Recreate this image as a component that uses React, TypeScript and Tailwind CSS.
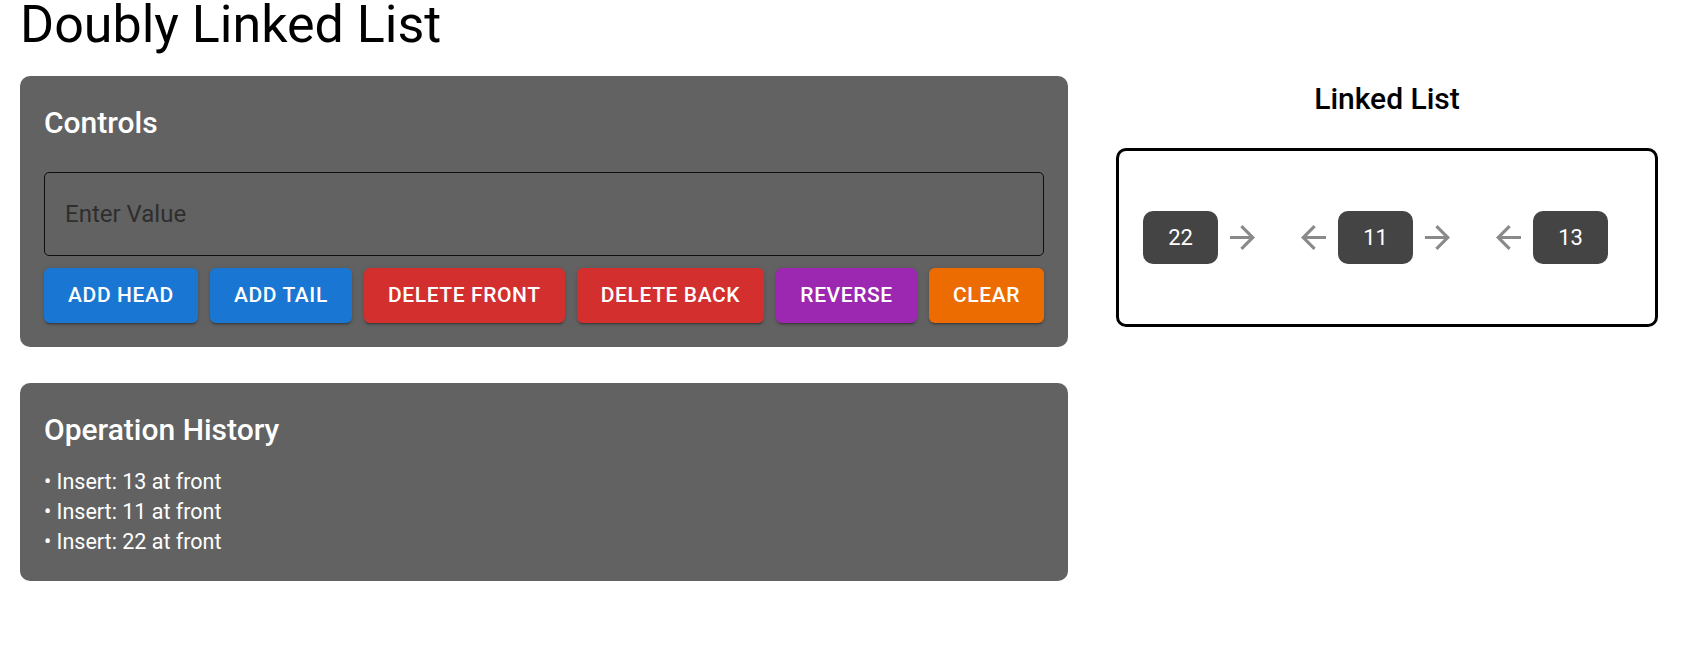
import React from 'react';

const buttons = [
    { label: 'Add Head', color: 'bg-[#1976d2]' },
    { label: 'Add Tail', color: 'bg-[#1976d2]' },
    { label: 'Delete Front', color: 'bg-[#d32f2f]' },
    { label: 'Delete Back', color: 'bg-[#d32f2f]' },
    { label: 'Reverse', color: 'bg-[#9c27b0]' },
    { label: 'Clear', color: 'bg-[#ed6c02]' },
];

const nodes = [22, 11, 13];

const history = ['Insert: 13 at front', 'Insert: 11 at front', 'Insert: 22 at front'];

const ArrowForward = () => (
    <svg width="25" height="25" viewBox="4 4 16 16" className="shrink-0 fill-[#8a8a8a]">
        <path d="M12 4l-1.41 1.41L16.17 11H4v2h12.17l-5.58 5.59L12 20l8-8z" />
    </svg>
);

const ArrowBack = () => (
    <svg width="25" height="25" viewBox="4 4 16 16" className="shrink-0 fill-[#8a8a8a]">
        <path d="M20 11H7.83l5.59-5.59L12 4l-8 8 8 8 1.41-1.41L7.83 13H20z" />
    </svg>
);

export default function App() {
    return (
        <div className="min-h-screen bg-white font-[Roboto,sans-serif] text-black">
            <div className="h-0 shadow-[0_2px_4px_-1px_rgba(0,0,0,0.2),0_4px_5px_0_rgba(0,0,0,0.14),0_1px_10px_0_rgba(0,0,0,0.12)]"></div>
            <div className="px-5">
                <h1 className="text-[52px] leading-[50px] font-normal">Doubly Linked List</h1>

                <div className="flex items-start mt-[26px]">
                    {/* left column */}
                    <div className="w-[1048px] shrink-0">
                        <div className="bg-[#626262] rounded-[10px] p-6">
                            <h2 className="text-[30px] leading-[45px] font-medium text-white mb-[27px]">Controls</h2>
                            <input
                                type="text"
                                placeholder="Enter Value"
                                className="w-full h-[84px] px-5 bg-transparent border border-black/85 rounded-[5px] text-[24px] text-[#2a2a2a] placeholder:text-[#2e2e2e] outline-none"
                            />
                            <div className="flex gap-3 mt-3">
                                {buttons.map((b) => (
                                    <button
                                        key={b.label}
                                        className={`${b.color} flex-auto h-[55px] px-[22px] rounded-md text-white uppercase whitespace-nowrap font-medium text-[21px] tracking-[0.02857em] shadow-[0_3px_1px_-2px_rgba(0,0,0,0.2),0_2px_2px_0_rgba(0,0,0,0.14),0_1px_5px_0_rgba(0,0,0,0.12)]`}
                                    >
                                        {b.label}
                                    </button>
                                ))}
                            </div>
                        </div>

                        <div className="bg-[#626262] rounded-[10px] p-6 mt-9">
                            <h2 className="text-[30px] leading-[45px] font-medium text-white mb-[15px]">Operation History</h2>
                            <ul className="text-white text-[21.5px] leading-[30px]">
                                {history.map((h) => (
                                    <li key={h}>• {h}</li>
                                ))}
                            </ul>
                        </div>
                    </div>

                    {/* right column */}
                    <div className="ml-12 w-[542px] shrink-0 flex flex-col items-center">
                        <h2 className="text-[30px] leading-[45px] font-medium">Linked List</h2>
                        <div className="w-full h-[179px] mt-[27px] border-[3px] border-black rounded-[10px] flex items-center pl-6 gap-[46px]">
                            {nodes.map((n, i) => (
                                <div key={n} className="flex items-center gap-3">
                                    {i > 0 && <ArrowBack />}
                                    <div className="w-[75px] h-[53px] rounded-[10px] bg-[#444444] text-white text-[22px] flex items-center justify-center">
                                        {n}
                                    </div>
                                    {i < nodes.length - 1 && <ArrowForward />}
                                </div>
                            ))}
                        </div>
                    </div>
                </div>
            </div>
        </div>
    );
}
